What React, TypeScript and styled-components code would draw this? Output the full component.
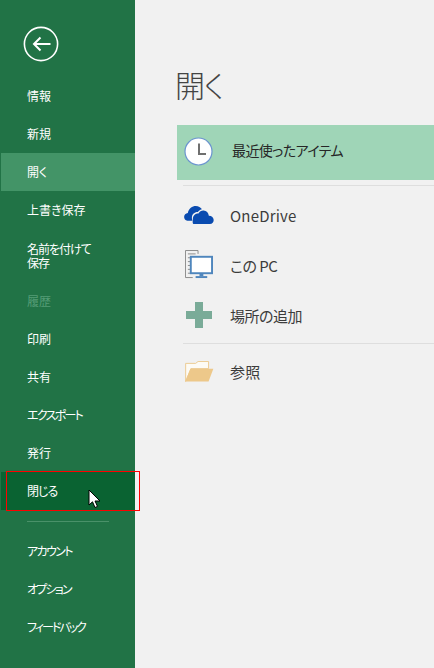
import styled, { createGlobalStyle } from "styled-components"

const GlobalStyle = createGlobalStyle`
    html, body {
        margin: 0;
        padding: 0;
        background: #f1f1f1;
    }
    * {
        box-sizing: border-box;
    }
`

const FONT = `"Noto Sans CJK JP", "Noto Sans", sans-serif`

const Page = styled.div`
    display: flex;
    width: 434px;
    height: 668px;
    overflow: hidden;
    background: #f1f1f1;
    font-family: ${FONT};
    font-feature-settings: "palt";
    position: relative;
`

const Sidebar = styled.nav`
    flex: 0 0 135px;
    height: 100%;
    background: #217346;
    padding: 18px 0 0 1px;
    display: flex;
    flex-direction: column;
`

const BackButton = styled.div`
    height: 52px;
    margin-bottom: 7px;
    padding-left: 22px;
    display: flex;
    align-items: center;
`

const NavItem = styled.div<{ $active?: boolean; $hover?: boolean; $disabled?: boolean; $tall?: boolean; $squeeze?: number }>`
    position: relative;
    min-height: ${props => props.$tall ? "53px" : "38px"};
    padding-left: 26px;
    display: flex;
    align-items: center;
    font-size: 12px;
    line-height: 14px;
    letter-spacing: ${props => props.$squeeze ? `-${props.$squeeze}px` : "0"};
    color: ${props => props.$disabled ? "#559c76" : "#ffffff"};
    background: ${props => props.$active ? "#439467" : props.$hover ? "#0a6332" : "transparent"};
`

const Divider = styled.div`
    width: 82px;
    height: 1px;
    margin: 11px 0 10px 26px;
    background: #4a9169;
    flex: none;
`

const Highlight = styled.div`
    position: absolute;
    left: 5px;
    top: -1px;
    width: 134px;
    height: 40px;
    border: 1px solid #ff0000;
    z-index: 2;
`

const Cursor = styled.svg`
    position: absolute;
    left: 87px;
    top: 17px;
    z-index: 3;
`

const Main = styled.main`
    flex: 1;
    padding: 64px 0 0 42px;
    min-width: 0;
`

const Title = styled.h1`
    margin: 0 0 21px -2px;
    height: 40px;
    font-size: 30px;
    line-height: 40px;
    font-weight: 300;
    letter-spacing: -1px;
    color: #444444;
`

const RecentRow = styled.div`
    height: 55px;
    background: #9fd5b7;
    display: flex;
    align-items: center;
    padding: 0 0 2px 7px;
    gap: 19px;
    font-size: 14px;
    color: #262626;
`

const RecentLabel = styled.span`
    padding-bottom: 4px;
    letter-spacing: -0.6px;
`

const Separator = styled.div<{ $before: number; $after: number }>`
    height: 1px;
    margin: ${props => props.$before}px 0 ${props => props.$after}px 6px;
    background: #dedede;
`

const PlaceRow = styled.div<{ $tight?: boolean }>`
    height: 50px;
    padding-bottom: 2px;
    display: flex;
    align-items: center;
    font-size: 15px;
    letter-spacing: ${props => props.$tight ? "-0.5px" : "0.2px"};
    color: #3c3c3c;
`

const PlaceIcon = styled.div`
    flex: 0 0 30px;
    margin: 0 16px 0 7px;
    display: flex;
    align-items: center;
    justify-content: center;
`

const ArrowBack = () => (
    <svg width="36" height="36" viewBox="0 0 36 36" fill="none" stroke="#fff">
        <circle cx="18" cy="18" r="16.6" strokeWidth="1.6" />
        <path d="M27.5 18H11M17.5 11.5L11 18L17.5 24.5" strokeWidth="2" />
    </svg>
)

const ClockIcon = () => (
    <svg width="29" height="29" viewBox="0 0 29 29">
        <circle cx="14.5" cy="14.5" r="13.5" fill="#fff" stroke="#6b94cf" strokeWidth="1.2" />
        <path d="M15 6.5V17H22" fill="none" stroke="#6f6f6f" strokeWidth="2" />
    </svg>
)

const CloudIcon = () => (
    <svg width="30" height="20" viewBox="0 0 32 21.5">
        <path d="M9 17H3.5C1.3 16.4 0 14.8 0 12.8C0 10.4 1.7 8.7 4 8.5C5 3.5 8.8 1 12.5 1C15.5 1 17.8 2.4 19.2 4.6C17.6 4.9 15.8 5.9 14.8 7.6C11.2 7.4 8.6 10 8.4 13C8.3 14.6 8.4 16 9 17Z" fill="#0a4bb0" />
        <path d="M10.5 20.5C8.8 20.5 9.2 17.8 9.4 14.8C9.6 11.2 12.4 8.8 15.4 9.2C16.6 6.8 18.8 5.6 21 5.8C24 6 26.2 8.2 26.6 11.6C29.8 11.6 31.8 13.8 31.8 16.2C31.8 18.6 30.4 20.5 27.6 20.5Z" fill="#0a4bb0" />
    </svg>
)

const PcIcon = () => (
    <svg width="28" height="30" viewBox="0 0 29 31" fill="none">
        <path d="M.5 28.5V.5H13.5V4" stroke="#8a8a8a" />
        <path d="M3 4H11M3 8H6M3 12H6M3 16H6M3 20H6M3 24H6" stroke="#8a8a8a" />
        <path d="M.5 28.5H8" stroke="#8a8a8a" />
        <rect x="6" y="7" width="22" height="17" fill="#fff" stroke="#4f86bd" strokeWidth="2" />
        <rect x="15" y="24" width="4" height="3" fill="#4f86bd" />
        <rect x="11" y="27" width="12" height="2" fill="#4f86bd" />
    </svg>
)

const PlusIcon = () => (
    <svg width="26" height="26" viewBox="0 0 26 26">
        <path d="M9 0H17V9H26V17H17V26H9V17H0V9H9Z" fill="#7aab98" />
    </svg>
)

const FolderIcon = () => (
    <svg width="29" height="21" viewBox="0 0 30 22">
        <path d="M.5 21.5V2.5H11L13.5.5H24.5V8H6Z" fill="#fdfbf5" stroke="#eccb90" />
        <path d="M0 21.5L5.5 8H29.5L24.5 21.5Z" fill="#edc88a" />
    </svg>
)

const MouseCursor = () => (
    <Cursor width="13" height="20" viewBox="0 0 13 20">
        <path d="M1 1V16L4.5 12.8L7 18.5L9.5 17.4L7 12H12Z" fill="#fff" stroke="#000" strokeWidth="1" />
    </Cursor>
)

const App = () => (
    <Page>
        <GlobalStyle />
        <Sidebar>
            <BackButton>
                <ArrowBack />
            </BackButton>
            <NavItem>情報</NavItem>
            <NavItem>新規</NavItem>
            <NavItem $active>開く</NavItem>
            <NavItem>上書き保存</NavItem>
            <NavItem $tall $squeeze={1}>名前を付けて<br />保存</NavItem>
            <NavItem $disabled>履歴</NavItem>
            <NavItem>印刷</NavItem>
            <NavItem>共有</NavItem>
            <NavItem $squeeze={1.7}>エクスポート</NavItem>
            <NavItem>発行</NavItem>
            <NavItem $hover $squeeze={1}>
                閉じる
                <Highlight />
                <MouseCursor />
            </NavItem>
            <Divider />
            <NavItem $squeeze={1.6}>アカウント</NavItem>
            <NavItem $squeeze={1.8}>オプション</NavItem>
            <NavItem $squeeze={2}>フィードバック</NavItem>
        </Sidebar>
        <Main>
            <Title>開く</Title>
            <RecentRow>
                <ClockIcon />
                <RecentLabel>最近使ったアイテム</RecentLabel>
            </RecentRow>
            <Separator $before={5} $after={5} />
            <PlaceRow>
                <PlaceIcon><CloudIcon /></PlaceIcon>
                OneDrive
            </PlaceRow>
            <PlaceRow $tight>
                <PlaceIcon><PcIcon /></PlaceIcon>
                この PC
            </PlaceRow>
            <PlaceRow $tight>
                <PlaceIcon><PlusIcon /></PlaceIcon>
                場所の追加
            </PlaceRow>
            <Separator $before={2} $after={3} />
            <PlaceRow>
                <PlaceIcon><FolderIcon /></PlaceIcon>
                参照
            </PlaceRow>
        </Main>
    </Page>
)

export default App
